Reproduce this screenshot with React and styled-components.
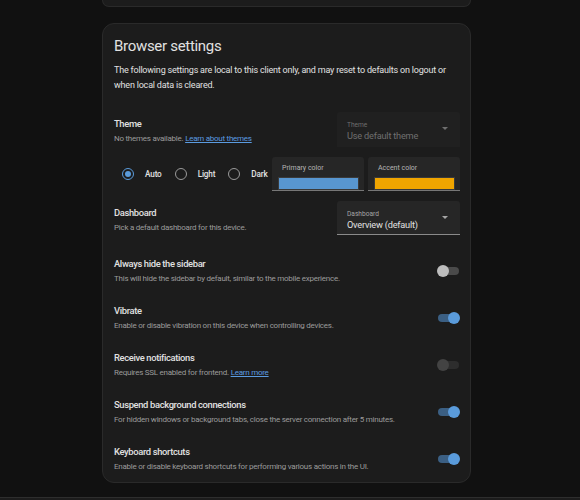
import React from 'react';
import styled, { createGlobalStyle } from 'styled-components';

const GlobalStyle = createGlobalStyle`
html, body {
  margin: 0;
  padding: 0;
  background: #111111;
  font-family: Roboto, "Liberation Sans", sans-serif;
  overflow: hidden;
}
`;

const Page = styled.div`
display: flex;
flex-direction: column;
height: 500px;
`;

const Main = styled.main`
flex: 1;
padding-left: 102px;
`;

const PrevCard = styled.div`
width: 369px;
height: 7px;
box-sizing: border-box;
background: #1c1c1c;
border: 1px solid #2a2a2a;
border-top: 0;
border-radius: 0 0 12px 12px;
`;

const Card = styled.section`
width: 369px;
box-sizing: border-box;
margin-top: 16px;
padding: 0 10px 0 11px;
background: #1c1c1c;
border: 1px solid #2a2a2a;
border-radius: 12px;
color: #e1e1e1;
`;

const Title = styled.h1`
margin: 0;
padding-top: 10px;
font-size: 15px;
font-weight: 400;
letter-spacing: -0.3px;
line-height: 24px;
color: #e1e1e1;
`;

const Intro = styled.p`
margin: 5px 0 0;
font-size: 9px;
letter-spacing: -0.2px;
line-height: 15px;
color: #e1e1e1;
`;

const Row = styled.div`
display: flex;
align-items: center;
justify-content: space-between;
height: ${p => p.h || 47}px;
margin-top: ${p => p.mt || 0}px;
`;

const Spacer = styled.div`
height: ${p => p.h}px;
`;

const Info = styled.div`
display: flex;
flex-direction: column;
gap: 2px;
padding-top: ${p => p.offset || 0}px;
`;

const Name = styled.div`
font-size: 9.4px;
font-weight: 500;
letter-spacing: -0.35px;
line-height: 13px;
color: #e1e1e1;
`;

const Desc = styled.div`
font-size: 8px;
letter-spacing: -0.25px;
line-height: 13px;
color: #9b9b9b;
`;

const Link = styled.a`
color: #5b9be0;
text-decoration: underline;
`;

const Select = styled.div`
position: relative;
width: 123px;
height: ${p => p.h || 34}px;
box-sizing: border-box;
padding: 9px 0 0 10px;
background: ${p => (p.disabled ? '#202020' : '#262626')};
border-radius: 3px 3px 0 0;
border-bottom: ${p => (p.disabled ? '0' : '1px solid #8a8a8a')};
`;

const SelectLabel = styled.div`
font-size: 6.6px;
line-height: 8px;
color: ${p => (p.disabled ? '#6f6f6f' : '#a5a5a5')};
`;

const SelectValue = styled.div`
font-size: 9.2px;
letter-spacing: -0.2px;
line-height: 13px;
color: ${p => (p.disabled ? '#6f6f6f' : '#e1e1e1')};
`;

const Caret = styled.span`
position: absolute;
right: 12px;
top: 15px;
width: 0;
height: 0;
border-left: 3.5px solid transparent;
border-right: 3.5px solid transparent;
border-top: 3.5px solid ${p => (p.disabled ? '#6f6f6f' : '#a5a5a5')};
`;

const Radios = styled.div`
display: flex;
align-items: center;
flex-shrink: 0;
padding-left: 8px;
`;

const RadioItem = styled.label`
display: flex;
align-items: center;
gap: 11px;
margin-right: 13px;
font-size: 8.2px;
font-weight: 500;
letter-spacing: -0.15px;
color: #e1e1e1;
&:last-child {
  margin-right: 0;
}
`;

const Circle = styled.span`
width: 12px;
height: 12px;
box-sizing: border-box;
border-radius: 50%;
border: 1.5px solid ${p => (p.on ? '#5a9bdb' : '#9a9a9a')};
display: flex;
align-items: center;
justify-content: center;
&::after {
  content: '';
  width: 6px;
  height: 6px;
  border-radius: 50%;
  background: ${p => (p.on ? '#5a9bdb' : 'transparent')};
}
`;

const Colors = styled.div`
display: flex;
flex-shrink: 0;
gap: 4px;
`;

const ColorField = styled.div`
width: 92px;
height: 34px;
box-sizing: border-box;
padding: 7px 5px 0 6px;
background: #262626;
border-radius: 3px 3px 0 0;
border-bottom: 1px solid #777;
`;

const ColorLabel = styled.div`
font-size: 7px;
line-height: 9px;
padding-left: 4px;
color: #b5b5b5;
`;

const Swatch = styled.div`
margin-top: 4px;
height: 13px;
box-sizing: border-box;
border: 1px solid #3a3a3a;
background: ${p => p.color};
`;

const Switch = styled.div`
position: relative;
flex-shrink: 0;
width: 21px;
height: 8px;
margin-right: 1px;
border-radius: 4px;
background: ${p => (p.on ? '#3b5f83' : p.disabled ? '#2d2d2d' : '#4a4a4a')};
&::after {
  content: '';
  position: absolute;
  top: -2px;
  left: ${p => (p.on ? '10px' : '-1px')};
  width: 12px;
  height: 12px;
  border-radius: 50%;
  background: ${p => (p.on ? '#5a9bdb' : p.disabled ? '#434343' : '#bdbdbd')};
}
`;

const Footer = styled.footer`
height: 2px;
background: #1c1c1c;
border-top: 1px solid #2e2e2e;
`;

const toggles = [
  { name: 'Always hide the sidebar', desc: 'This will hide the sidebar by default, similar to the mobile experience.', on: false },
  { name: 'Vibrate', desc: 'Enable or disable vibration on this device when controlling devices.', on: true },
  {
    name: 'Receive notifications',
    desc: (
      <>
        Requires SSL enabled for frontend. <Link href="#">Learn more</Link>
      </>
    ),
    on: false,
    disabled: true,
  },
  { name: 'Suspend background connections', desc: 'For hidden windows or background tabs, close the server connection after 5 minutes.', on: true },
  { name: 'Keyboard shortcuts', desc: 'Enable or disable keyboard shortcuts for performing various actions in the UI.', on: true },
];

export default function App() {
  return (
    <Page>
      <GlobalStyle />
      <Main>
        <PrevCard />
        <Card>
          <Title>Browser settings</Title>
          <Intro>
            The following settings are local to this client only, and may reset to defaults on logout or when local data is cleared.
          </Intro>

          <Row h={35} mt={19}>
            <Info offset={3}>
              <Name>Theme</Name>
              <Desc>
                No themes available. <Link href="#">Learn about themes</Link>
              </Desc>
            </Info>
            <Select disabled h={35}>
              <SelectLabel disabled>Theme</SelectLabel>
              <SelectValue disabled>Use default theme</SelectValue>
              <Caret disabled />
            </Select>
          </Row>

          <Row h={34} mt={10}>
            <Radios>
              <RadioItem><Circle on />Auto</RadioItem>
              <RadioItem><Circle />Light</RadioItem>
              <RadioItem><Circle />Dark</RadioItem>
            </Radios>
            <Colors>
              <ColorField>
                <ColorLabel>Primary color</ColorLabel>
                <Swatch color="#5896d0" />
              </ColorField>
              <ColorField>
                <ColorLabel>Accent color</ColorLabel>
                <Swatch color="#f0a500" />
              </ColorField>
            </Colors>
          </Row>

          <Row h={34} mt={10}>
            <Info offset={3}>
              <Name>Dashboard</Name>
              <Desc>Pick a default dashboard for this device.</Desc>
            </Info>
            <Select>
              <SelectLabel>Dashboard</SelectLabel>
              <SelectValue>Overview (default)</SelectValue>
              <Caret />
            </Select>
          </Row>

          <Spacer h={12} />
          {toggles.map(t => (
            <Row key={t.name}>
              <Info>
                <Name>{t.name}</Name>
                <Desc>{t.desc}</Desc>
              </Info>
              <Switch on={t.on} disabled={t.disabled} />
            </Row>
          ))}
        </Card>
      </Main>
      <Footer />
    </Page>
  );
}
